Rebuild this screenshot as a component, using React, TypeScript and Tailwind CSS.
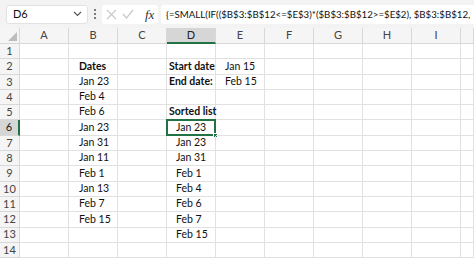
import React from "react";

const cols = ["A", "B", "C", "D", "E", "F", "G", "H", "I", ""];

type Cell = { t: string; b?: boolean; pl?: string };
const data: Record<number, Record<string, Cell>> = {
  2: { B: { t: "Dates", b: true, pl: "pl-[10px]" }, D: { t: "Start date", b: true, pl: "pl-[2px]" }, E: { t: "Jan 15", pl: "pl-[9px]" } },
  3: { B: { t: "Jan 23", pl: "pl-[10px]" }, D: { t: "End date:", b: true, pl: "pl-[2px]" }, E: { t: "Feb 15", pl: "pl-[9px]" } },
  4: { B: { t: "Feb 4", pl: "pl-[10px]" } },
  5: { B: { t: "Feb 6", pl: "pl-[10px]" }, D: { t: "Sorted list", b: true, pl: "pl-[2px]" } },
  6: { B: { t: "Jan 23", pl: "pl-[10px]" }, D: { t: "Jan 23", pl: "pl-[9px]" } },
  7: { B: { t: "Jan 31", pl: "pl-[10px]" }, D: { t: "Jan 23", pl: "pl-[9px]" } },
  8: { B: { t: "Jan 11", pl: "pl-[10px]" }, D: { t: "Jan 31", pl: "pl-[9px]" } },
  9: { B: { t: "Feb 1", pl: "pl-[10px]" }, D: { t: "Feb 1", pl: "pl-[9px]" } },
  10: { B: { t: "Jan 13", pl: "pl-[10px]" }, D: { t: "Feb 4", pl: "pl-[9px]" } },
  11: { B: { t: "Feb 7", pl: "pl-[10px]" }, D: { t: "Feb 6", pl: "pl-[9px]" } },
  12: { B: { t: "Feb 15", pl: "pl-[10px]" }, D: { t: "Feb 7", pl: "pl-[9px]" } },
  13: { D: { t: "Feb 15", pl: "pl-[9px]" } },
};

export default function App() {
  const rows = Array.from({ length: 14 }, (_, i) => i + 1);
  return (
    <div className="w-[474px] h-[258px] overflow-hidden bg-white text-[#111]" style={{ fontFamily: "Lato, 'Liberation Sans', sans-serif" }}>
      {/* toolbar */}
      <div className="h-[28px] bg-[#f3f3f3] flex items-center pl-[6px] gap-[3px]">
        <div className="w-[82px] h-[19px] bg-white border border-[#e2e2e2] rounded-[3px] flex items-center justify-between pl-[6px] pr-[5px] text-[11px]">
          <span>D6</span>
          <svg width="9" height="6" viewBox="0 0 9 6"><path d="M1 1l3.5 3.5L8 1" fill="none" stroke="#555" strokeWidth="1.2" /></svg>
        </div>
        <div className="w-[8px] flex flex-col items-center gap-[2px]">
          <span className="w-[2px] h-[2px] bg-[#555] rounded-full" />
          <span className="w-[2px] h-[2px] bg-[#555] rounded-full" />
          <span className="w-[2px] h-[2px] bg-[#555] rounded-full" />
        </div>
        <div className="w-[56px] h-[19px] bg-white rounded-[3px] flex items-center pl-[4px] gap-[5px]">
          <svg width="11" height="11" viewBox="0 0 11 11"><path d="M1 1l9 9M10 1l-9 9" stroke="#c9c9c9" strokeWidth="1.2" /></svg>
          <svg width="12" height="10" viewBox="0 0 12 10"><path d="M1 5l3.5 4L11 1" fill="none" stroke="#c9c9c9" strokeWidth="1.2" /></svg>
          <span className="ml-[6px] italic text-[13px] text-[#333] leading-none" style={{ fontFamily: "'Liberation Serif', serif" }}>fx</span>
        </div>
        <div className="flex-1 h-[19px] bg-white rounded-l-[3px] flex items-center pl-[5px] text-[9.7px] whitespace-nowrap overflow-hidden">
          {"{=SMALL(IF(($B$3:$B$12<=$E$3)*($B$3:$B$12>=$E$2), $B$3:$B$12,"}
        </div>
      </div>
      {/* grid */}
      <div className="grid grid-cols-[20px_repeat(9,49px)_1fr] grid-rows-[16px_repeat(14,15.3px)] text-[10.5px]">
        <div className="bg-[#f5f5f5] border-r border-b border-[#d8d8d8] relative">
          <svg className="absolute right-[2px] bottom-[2px]" width="9" height="9" viewBox="0 0 9 9"><path d="M9 0L9 9L0 9Z" fill="#bdbdbd" /></svg>
        </div>
        {cols.map((c) => (
          <div
            key={c || "x"}
            className={`flex items-center justify-center text-[11px] border-r border-[#d8d8d8] ${c === "D" ? "bg-[#d6d6d6] border-b-2 border-b-[#217346] text-[#222]" : "bg-[#f5f5f5] border-b text-[#444]"}`}
          >
            {c}
          </div>
        ))}
        {rows.map((r) => (
          <React.Fragment key={r}>
            <div
              className={`flex items-center justify-center text-[11px] border-b border-[#d8d8d8] ${r === 6 ? "bg-[#d6d6d6] border-r-2 border-r-[#217346] text-[#222]" : "bg-[#f5f5f5] border-r text-[#444]"}`}
            >
              {r}
            </div>
            {cols.map((c) => {
              const cell = data[r]?.[c];
              const sel = r === 6 && c === "D";
              return (
                <div
                  key={c || "x"}
                  className={`relative flex items-center border-r border-b border-[#e1e1e1] whitespace-nowrap ${cell?.pl ?? ""} ${cell?.b ? "font-bold" : ""}`}
                >
                  {cell?.t}
                  {sel && (
                    <>
                      <div className="absolute left-[-1px] top-[-1px] right-[-1px] bottom-[-1px] border-2 border-[#217346] pointer-events-none" />
                      <div className="absolute right-[-3px] bottom-[-3px] w-[5px] h-[5px] bg-[#217346] border border-white" />
                    </>
                  )}
                </div>
              );
            })}
          </React.Fragment>
        ))}
      </div>
    </div>
  );
}
